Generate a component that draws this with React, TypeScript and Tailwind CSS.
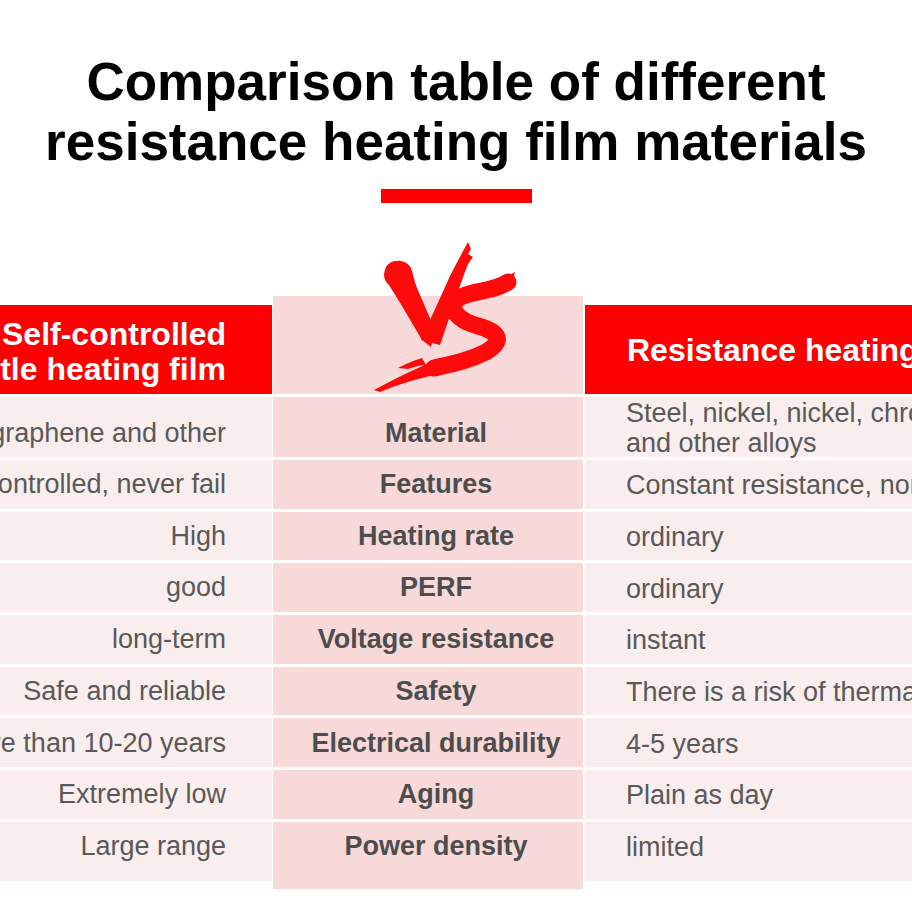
type Row = {
  left: string;
  mid: string;
  right: React.ReactNode;
  side: string;
  center: string;
  shift: string;
};

const rows: Row[] = [
  {
    left: "Carbon nanotube, graphene and other",
    mid: "Material",
    right: (
      <>
        Steel, nickel, nickel, chromium
        <br />
        and other alloys
      </>
    ),
    side: "h-[60px]",
    center: "h-[60px]",
    shift: "pt-[12px]",
  },
  { left: "Temperature self-controlled, never fail", mid: "Features", right: "Constant resistance, non-self-limiting", side: "h-[48.7px]", center: "h-[48.7px]", shift: "" },
  { left: "High", mid: "Heating rate", right: "ordinary", side: "h-[48.7px]", center: "h-[48.7px]", shift: "" },
  { left: "good", mid: "PERF", right: "ordinary", side: "h-[48.7px]", center: "h-[48.7px]", shift: "" },
  { left: "long-term", mid: "Voltage resistance", right: "instant", side: "h-[48.7px]", center: "h-[48.7px]", shift: "" },
  { left: "Safe and reliable", mid: "Safety", right: "There is a risk of thermal runaway", side: "h-[48.7px]", center: "h-[48.7px]", shift: "" },
  { left: "More than 10-20 years", mid: "Electrical durability", right: "4-5 years", side: "h-[48.7px]", center: "h-[48.7px]", shift: "" },
  { left: "Extremely low", mid: "Aging", right: "Plain as day", side: "h-[48.7px]", center: "h-[48.7px]", shift: "" },
  { left: "Large range", mid: "Power density", right: "limited", side: "h-[59px] pb-[10px]", center: "h-[67px] pb-[18px]", shift: "" },
];

function VsLogo() {
  return (
    <svg
      className="absolute left-[97px] top-[-56px]"
      width="150"
      height="155"
      viewBox="0 0 150 155"
      fill="#fe0a0a"
    >
      {/* V left arm */}
      <path d="M15,30 C17,19 35,17 41,28 C43,34 44,40 47,48 L65,90 L61,107 L52,100 L32,66 L19,45 C14,40 13,35 15,30 Z" />
      {/* V right arm */}
      <path d="M51,100 L80,36 C86,24 92,13 98,2 L101,9 L98,14 L103,17 L98,24 C94,34 90,46 86,58 L70,105 Z" />
      {/* S */}
      <path
        d="M138,42 C124,52 102,50 89,58 C77,67 86,80 108,86 C130,92 134,101 116,112 C98,121 82,124 64,128"
        fill="none"
        stroke="#fe0a0a"
        strokeWidth="17"
        strokeLinecap="round"
      />
      <path d="M128,42 L145,32 L141,48 Z" />
      {/* brush tail */}
      <path d="M70,118 C52,126 30,136 4,150 L10,152 C32,143 52,137 72,134 Z" />
      <path d="M52,118 C42,121 36,124 28,128 L38,129 C44,127 50,125 56,125 Z" />
      <path d="M30,137 C22,141 14,145 8,149 L14,148 C20,146 26,143 32,140 Z" />
    </svg>
  );
}

export default function App() {
  return (
    <div className="h-[912px] w-[912px] overflow-hidden bg-white font-['Liberation_Sans',Arial,sans-serif]">
      <h1 className="pt-[52px] text-center text-[53px] font-bold leading-[60px] text-black">
        Comparison table of different
        <br />
        resistance heating film materials
      </h1>
      <div className="mx-auto mt-[17px] h-[14px] w-[151px] bg-[#fe0000]" />

      <div className="mt-[93px] flex">
        {/* left column */}
        <div className="flex w-[272px] shrink-0 flex-col gap-[3px] overflow-hidden pt-[9px]">
          <div className="flex h-[89px] items-center justify-end bg-[#fe0000] pr-[46px] pt-[4px]">
            <div className="whitespace-nowrap text-right text-[32px] font-bold leading-[35px] text-white">
              Self-controlled
              <br />
              subtle heating film
            </div>
          </div>
          {rows.map((r) => (
            <div
              key={r.mid}
              className={`flex items-center justify-end bg-[#f9eded] pr-[46px] ${r.side} ${r.shift}`}
            >
              <span className="whitespace-nowrap text-[27px] text-[#595959]">{r.left}</span>
            </div>
          ))}
        </div>

        {/* middle column */}
        <div className="relative ml-[1px] flex w-[310px] shrink-0 flex-col gap-[3px]">
          <div className="relative h-[98px] bg-[#f8d9da]">
            <VsLogo />
          </div>
          {rows.map((r) => (
            <div
              key={r.mid}
              className={`flex items-center justify-center bg-[#f8d9da] pl-[16px] ${r.center} ${r.shift}`}
            >
              <span className="whitespace-nowrap text-[27px] font-bold text-[#4d4d4d]">{r.mid}</span>
            </div>
          ))}
        </div>

        {/* right column */}
        <div className="ml-[2px] flex w-[400px] shrink-0 flex-col gap-[3px] pt-[9px]">
          <div className="flex h-[89px] items-center bg-[#fe0000] pl-[42px]">
            <span className="whitespace-nowrap text-[32px] font-bold text-white">
              Resistance heating film
            </span>
          </div>
          {rows.map((r) => (
            <div key={r.mid} className={`flex items-center bg-[#f9eded] pl-[41px] pt-[2px] ${r.side}`}>
              <span className="whitespace-nowrap text-[27px] leading-[30px] text-[#595959]">
                {r.right}
              </span>
            </div>
          ))}
        </div>
      </div>
    </div>
  );
}
